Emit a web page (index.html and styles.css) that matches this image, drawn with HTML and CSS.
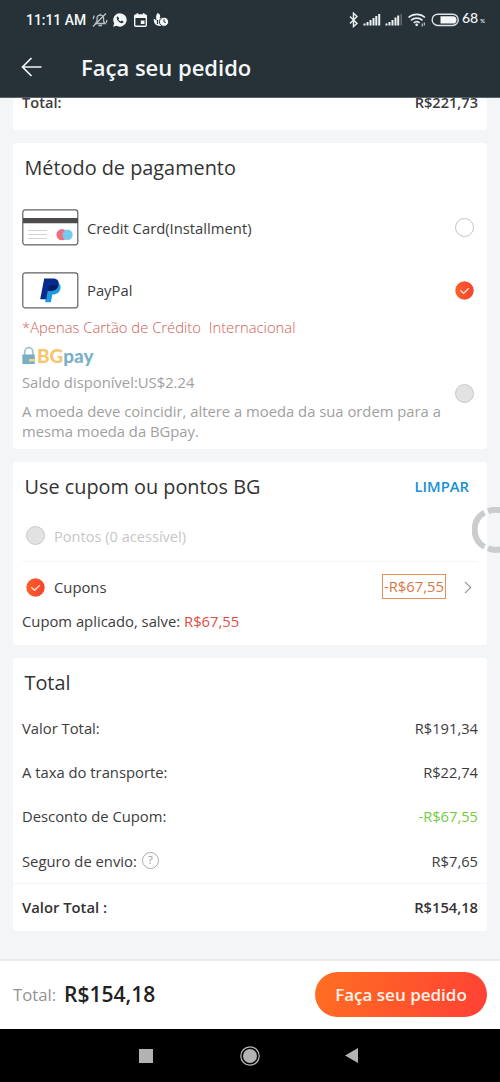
FILE: index.html
```html
<!DOCTYPE html>
<html lang="pt-BR">
<head>
<meta charset="utf-8">
<title>Faça seu pedido</title>
<link rel="stylesheet" href="styles.css">
</head>
<body>
<div class="screen">
  <header class="header">
    <div class="status">
      <span class="clock">11:11 AM</span>
      <svg class="status-left" width="80" height="16" viewBox="0 0 80 16">
        <g fill="none" stroke="#b9c1c4" stroke-width="1.3">
          <path d="M3.500 11.500 5 9.500V6.500a3.300 3.300 0 0 1 6.600 0V9.500l1.500 2ZM6.500 13.500h3.500M8.300 3.200V1.700M1 14.500 14 1.500M1.200 7l1-3.500M15 8l-.8 3"/>
        </g>
        <path d="M28 1.200a6.700 6.700 0 1 1-3.200 12.600l-3.600 1 1-3.500A6.700 6.700 0 0 1 28 1.200Z" fill="#f5f8f9"/>
        <path d="M25.500 4.200c-2 1.500.2 4.800 2.200 6.200 2 1.300 3.500.8 4-.7l-2-1.300-1.100 1c-1-.4-1.800-1.300-2.200-2.200l.8-1Z" fill="#263238"/>
        <path d="M43.700 3h9.600a1 1 0 0 1 1 1v9.200a1 1 0 0 1-1 1h-9.600a1 1 0 0 1-1-1V4a1 1 0 0 1 1-1Z" fill="none" stroke="#f5f8f9" stroke-width="1.400"/>
        <path d="M42.500 3h12v3h-12ZM44.500 1.200h1.700V4h-1.700ZM50.800 1.200h1.700V4h-1.700ZM48.800 8.500h3.700V12h-3.700Z" fill="#f5f8f9"/>
        <path d="M65.500 1c3 1.200 3.300 3.400 2 5.300l3-.8-2 5 .5 3.500c-3.500.2-6-1.200-7-4l-.3-3.500 3.200 2.300C63.500 5.500 64 3.500 65.500 1Z" fill="#f5f8f9"/>
        <path d="M65.500 8v4" stroke="#263238" stroke-width="1.200"/>
        <circle cx="72" cy="9.800" r="4.600" fill="#f5f8f9" stroke="#263238"/>
        <path d="M72 7.300V10l1.800.5" fill="none" stroke="#263238"/>
      </svg>
      <svg class="status-right" width="112" height="16" viewBox="0 0 112 16">
        <path d="m2 4.500 7 7-3.500 3V1.200L9 4.500l-7 7" fill="none" stroke="#e5eaec" stroke-width="1.500"/>
        <path d="M16.500 13.500v-2M19.500 13.500v-3.500M22.500 13.500V8M25.500 13.500V6M28.300 13.500V4M31.200 13.500V2M38.500 13.500v-2M41.500 13.500v-3.500M44.500 13.500V8M47.500 13.500V5.500M50.200 13.500V3.500" stroke="#eef2f3" stroke-width="2"/>
        <path d="M53.200 13.500V2" stroke="#6a757a" stroke-width="1.300"/>
        <g fill="none" stroke="#e5eaec" stroke-width="1.700"><path d="M60.500 5.500c4.500-4.300 12-4.300 16.500 0M63 8.300c3.300-3 8.200-3 11.500 0M65.700 10.800c1.800-1.500 4.300-1.500 6 0"/></g>
        <circle cx="68.700" cy="12.800" r="1.400" fill="#e5eaec"/>
        <path d="M74.200 11.500v3M76.300 10.500v3" stroke="#bfc6c9" stroke-width="1.200"/>
        <rect x="84.200" y="2.200" width="26" height="11.300" rx="5.600" fill="none" stroke="#dde2e4" stroke-width="1.400"/>
        <path d="M92.500 4.200h12.300a3.700 3.700 0 0 1 0 7.400H92.500Z" fill="#f3f6f7"/>
      </svg>
      <span class="battery">68<small>%</small></span>
    </div>
    <div class="titlebar">
      <svg width="22" height="20" viewBox="0 0 22 20" fill="none" stroke="#f2f5f6" stroke-width="1.700"><path d="M20.500 10H1.500M10.500 1 1.500 10l9 9"/></svg>
      <h1>Faça seu pedido</h1>
    </div>
  </header>

  <main class="content">
    <section class="card subtotal"><span>Total:</span><span>R$221,73</span></section>

    <section class="card payment">
      <h2>Método de pagamento</h2>
      <div class="method">
        <svg width="57" height="37" viewBox="0 0 57 37">
          <rect x=".8" y=".8" width="55" height="35" rx="2.500" fill="#fff" stroke="#626262" stroke-width="1.200"/>
          <path d="M1 9h55v5.300H1Z" fill="#4c4a4b"/>
          <path d="M6 21.500h19M6 25.500h19M6 29.500h19" stroke="#d4d4d4"/>
          <circle cx="40" cy="25.700" r="5.600" fill="#ef6f7c"/><circle cx="45.500" cy="25.700" r="5.200" fill="#74cbee"/>
        </svg>
        <span>Credit Card(Installment)</span><i class="radio"></i>
      </div>
      <div class="method paypal">
        <svg width="57" height="37" viewBox="0 0 57 37">
          <rect x=".8" y=".8" width="55" height="35" rx="2.500" fill="#fff" stroke="#626262" stroke-width="1.200"/>
          <path d="M25.500 10h8c4 .5 5.800 3.300 4.800 7-1 4-4 5.500-8 5.500l-1.400 7.700h-5.700Z" fill="#1b9ae0"/>
          <path d="M22.200 6.500h8.500c4.600 0 6.800 2.500 5.800 6.600-1 4.300-4.200 5.900-9 5.900h-1.800l-1.500 8.300h-6Z" fill="#062b8c"/>
          <path d="M27 13.500h9.300c-1 3.900-4.200 5.500-8.800 5.500h-1.600Z" fill="#061c62"/>
        </svg>
        <span>PayPal</span>
        <svg class="check" width="19" height="19" viewBox="0 0 19 19"><use href="#checked"/></svg>
      </div>
      <p class="note">*Apenas Cartão de Crédito&nbsp; Internacional</p>
      <div class="bgpay">
        <svg width="14" height="19" viewBox="0 0 14 19"><path d="M2.800 9V5.700a4 4 0 0 1 8 0V9" fill="none" stroke="#9fc6cf" stroke-width="1.800"/><path d="M.3 8.500h12.500V18H.3Z" fill="#79afc5"/><path d="M7 13h5.800v2.500H7Z" fill="#efd48b"/></svg>
        <b class="bg">BG</b><b class="pay">pay</b>
      </div>
      <div class="wallet">
        <div><p class="balance">Saldo disponível:US$2.24</p><p class="hint">A moeda deve coincidir, altere a moeda da sua ordem para a mesma moeda da BGpay.</p></div>
        <i class="radio off"></i>
      </div>
    </section>

    <section class="card coupons">
      <div class="heading"><h2>Use cupom ou pontos BG</h2><a>LIMPAR</a></div>
      <div class="points"><i class="radio off"></i><span>Pontos (0 acessível)</span></div>
      <div class="coupon">
        <svg class="check" width="19" height="19" viewBox="0 0 19 19">
          <defs><linearGradient id="warm"><stop stop-color="#fb602b"/><stop offset="1" stop-color="#f5432c"/></linearGradient></defs>
          <g id="checked"><circle cx="9.500" cy="9.500" r="9.200" fill="url(#warm)"/><path d="m5.300 9.300 3.300 3 5.200-5" fill="none" stroke="#ffe3d8" stroke-width="1.300"/></g>
        </svg>
        <span>Cupons</span><span class="value">-R$67,55</span>
        <svg width="8" height="13" viewBox="0 0 8 13" fill="none" stroke="#999" stroke-width="1.200"><path d="m1 .8 5.700 5.700L1 12.200"/></svg>
      </div>
      <p class="applied">Cupom aplicado, salve: <span>R$67,55</span></p>
    </section>

    <section class="card totals">
      <h2>Total</h2>
      <div class="line"><span>Valor Total:</span><span>R$191,34</span></div>
      <div class="line"><span>A taxa do transporte:</span><span>R$22,74</span></div>
      <div class="line"><span>Desconto de Cupom:</span><span class="green">-R$67,55</span></div>
      <div class="line"><span class="insurance">Seguro de envio:<i class="help">?</i></span><span>R$7,65</span></div>
      <div class="line grand"><span>Valor Total :</span><span>R$154,18</span></div>
    </section>
    <svg class="floating" width="28" height="46" viewBox="0 0 28 46" fill="none" stroke="#cbcccd" stroke-width="6"><path d="M12.500 40A20 20 0 0 1 12.500 5.500M16 4.200A20 20 0 0 1 31 4.200M31 41.500A20 20 0 0 1 16 41.300"/></svg>
  </main>

  <footer class="checkout"><span class="label">Total:</span><strong>R$154,18</strong><button>Faça seu pedido</button></footer>
  <nav class="nav">
    <svg width="14" height="14"><rect width="14" height="14" fill="#b3b3b3"/></svg>
    <svg width="20" height="20"><circle cx="10" cy="10" r="9.200" fill="none" stroke="#bbb" stroke-width="1.200"/><circle cx="10" cy="10" r="7" fill="#b3b3b3"/></svg>
    <svg width="13" height="15"><path d="M13 0v15L0 7.500Z" fill="#b3b3b3"/></svg>
  </nav>
</div>
</body>
</html>
```
FILE: styles.css
```css
* { box-sizing: border-box; }
body { margin: 0; font-family: "Open Sans", "Noto Sans", sans-serif; font-size: 14.8px; color: #3c3c3c; }
h1, h2, p { margin: 0; }
svg { display: block; flex: none; }
.screen { width: 500px; height: 1082px; display: flex; flex-direction: column; overflow: hidden; background: #f3f5f7; }
.header { height: 98px; flex: none; background: #263238; color: #f4f7f8; border-bottom: 1px solid #59636a; z-index: 1; }
.status { height: 40px; display: flex; align-items: center; padding: 0 14px 0 26px; }
.clock { font: 500 13.900px Roboto, sans-serif; width: 66px; white-space: nowrap; }
.status-right { margin-left: auto; }
.battery { font: 500 14px/16px Lato, sans-serif; width: 24px; margin: -2px 0 0 2px; white-space: nowrap; }
.battery small { font-size: 6px; margin-left: 2px; }
.titlebar { height: 54px; display: flex; align-items: center; gap: 38px; padding-left: 21px; }
h1 { font-size: 22px; line-height: 30px; font-weight: 600; }
.content { height: 861px; flex: none; padding: 0 13px; position: relative; }
.card { background: #fff; border-radius: 4px; padding: 0 9px; margin-bottom: 13px; }
.subtotal { height: 32px; display: flex; justify-content: space-between; line-height: 20px; font-weight: 600; font-size: 14.600px; }
.subtotal span { margin-top: -6px; }
h2 { font-size: 19.850px; line-height: 28px; font-weight: 400; color: #333; padding-left: 2.500px; }
.payment { height: 306px; padding-top: 11px; }
.method { height: 37px; margin-top: 27px; display: flex; align-items: center; gap: 8px; }
.paypal { margin-top: 25.500px; }
.radio { width: 19px; height: 19px; flex: none; border: 1.500px solid #c5c5c5; border-radius: 50%; margin: 0 4px 0 auto; }
.radio.off { background: #e2e2e2; border-color: #c9c9c9; }
.method .check { margin: 0 4px 0 auto; }
.note { margin-top: 7px; line-height: 22px; font-weight: 300; color: #cf5c55; }
.bgpay { height: 19px; margin-top: 8px; display: flex; align-items: center; font: 700 18.900px/19px Lato, sans-serif; }
.bg { color: #f6c56d; margin-left: 1px; }
.pay { color: #79b1c9; }
.wallet { display: flex; align-items: center; color: #a0a0a0; justify-content: space-between; margin-top: 7px; }
.wallet > div { width: 428px; }
.balance { line-height: 20px; margin-bottom: 9px; }
.hint { line-height: 20px; }
.wallet .radio { position: relative; top: -13px; }
.coupons { height: 183px; padding-top: 11px; }
.heading { display: flex; align-items: center; justify-content: space-between; padding-right: 9px; }
.heading a { color: #168fd6; font-weight: 600; line-height: 20px; margin-top: -2px; }
.points { height: 61px; display: flex; align-items: center; gap: 9px; padding: 9px 0 0 4px; color: #c7c7c7; border-bottom: 1px solid #f5f5f5; font-size: 14.600px; }
.points .radio { margin: 0; }
.coupon { height: 50px; display: flex; align-items: center; padding: 0 6px 0 4px; gap: 9px; line-height: 20px; }
.coupon span { margin-top: -1px; }
.value { margin-left: auto; margin-right: 9px; border: 1.500px solid #e3905e; line-height: 23px; padding: 0 1px; color: #d97746; }
.applied { line-height: 20px; margin-top: -1px; }
.applied span { color: #dc4e43; }
.totals { height: 273px; padding-top: 11px; margin-bottom: 0; }
.totals h2 { margin-bottom: 9px; }
.line { height: 44.200px; display: flex; align-items: center; justify-content: space-between; }
.line > span:last-child { font-size: 14.700px; }
.insurance { display: flex; align-items: center; gap: 5px; }
.help { width: 17px; height: 17px; border: 1.200px solid #aaa; border-radius: 50%; font-style: normal; font-size: 11px; line-height: 14px; text-align: center; color: #999; }
.green { color: #73cb43; }
.grand { height: 47px; font-weight: 600; color: #333; margin: 0 -9px; padding: 0 9px; border-top: 1px solid #f5f5f5; }
.floating { position: absolute; right: 0; top: 409px; }
.checkout { height: 70px; flex: none; background: #fff; border-top: 2px solid #e8eaed; display: flex; align-items: center; padding: 0 13px 2px; }
.label { font-size: 16.700px; color: #929292; margin-right: 8px; }
.checkout strong { font-size: 21px; font-weight: 600; color: #222; }
button { width: 172px; height: 45px; margin-left: auto; border: 0; border-radius: 23px; background: linear-gradient(110deg, #ff6f22, #ff4035); color: #fff3e8; font: 600 17px "Open Sans", sans-serif; padding: 0; }
.nav { height: 53px; flex: none; background: #000; display: flex; align-items: center; padding-left: 139px; }
.nav svg:nth-child(2) { margin-left: 87px; }
.nav svg:nth-child(3) { margin-left: 85px; }
```
